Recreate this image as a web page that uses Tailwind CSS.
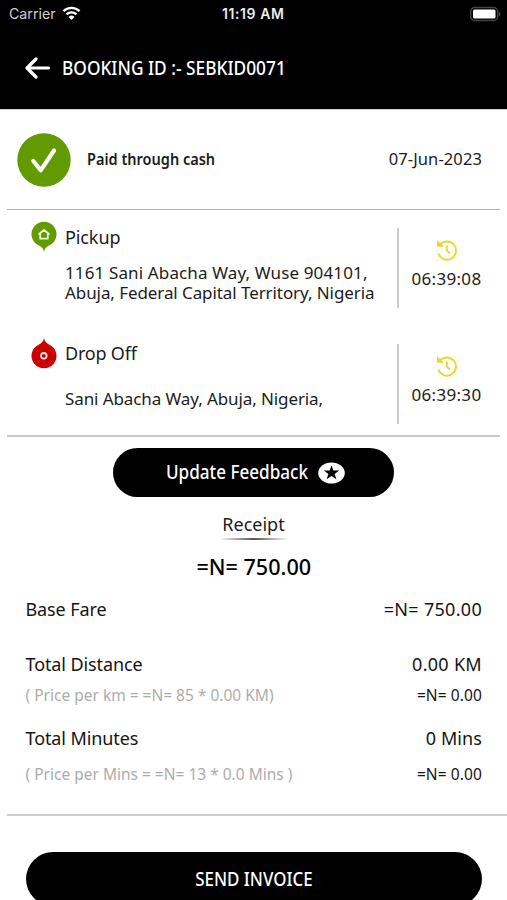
<!DOCTYPE html>
<html lang="en">
<head>
<meta charset="utf-8">
<title>Booking</title>
<script src="https://cdn.jsdelivr.net/npm/@tailwindcss/browser@4"></script>
</head>
<body class="w-[507px] h-[900px] overflow-hidden bg-white font-['Noto_Sans',sans-serif] text-[#1c1c1c] whitespace-nowrap">
<header class="h-[110px] border-b border-[#cfcfcf] bg-black text-white">
  <div class="relative flex h-[28px] items-center pl-[9px] pr-[6px] font-['Inter',sans-serif] text-[14.2px] leading-none">
    <span class="text-[#cfcfcf]">Carrier</span>
    <svg class="ml-[6px] -mt-[2px] w-[19px] h-[14px]" viewBox="0 0 18 14" fill="none" stroke="#fff" stroke-width="2.4"><path d="M1 5.200a11.400 11.400 0 0 1 16 0M4 8.400a7.200 7.200 0 0 1 10 0"/><path d="M9 14l-3-3.100a4.300 4.300 0 0 1 6 0z" fill="#fff" stroke="none"/></svg>
    <span class="absolute left-[222px] font-semibold text-[14px] tracking-[0.6px] text-[#ececec]">11:19 AM</span>
    <svg class="ml-auto -mt-[1px] w-[32px] h-[16px]" viewBox="0 0 32 16"><rect x="1.700" y="1.500" width="27" height="13" rx="4" fill="none" stroke="#444" stroke-width="1.500"/><rect x="4" y="3.500" width="22.500" height="9" rx="1.500" fill="#fff"/><path d="M30 5.500q2.500 2.500 0 5z" fill="#555"/></svg>
  </div>
  <div class="flex h-[79px] items-center pl-[25px]">
    <svg class="w-[26px] h-[22px]" viewBox="0 0 26 22" fill="none" stroke="#fff" stroke-width="3.200" stroke-linecap="round" stroke-linejoin="round"><path d="M11 2L2 11l9 9M2.500 11h21"/></svg>
    <h1 class="ml-[11px] origin-left scale-x-[0.865] text-[20px] font-medium">BOOKING ID :- SEBKID0071</h1>
  </div>
</header>
<main>
  <section class="mx-[7px] flex h-[100px] items-center border-b border-[#b0b0b0] pl-[10px] pr-[18px]">
    <svg class="w-[54px] h-[54px]" viewBox="0 0 54 54"><circle cx="27" cy="27" r="26.700" fill="#639a00"/><path d="M16.300 28l7.400 9.300L37 17.500" fill="none" stroke="#fff" stroke-width="4.200" stroke-linecap="round" stroke-linejoin="round"/></svg>
    <span class="ml-[16px] origin-left scale-x-[0.88] text-[16.5px] font-semibold">Paid through cash</span>
    <span class="ml-auto text-[16.5px] tracking-[0.1px]">07-Jun-2023</span>
  </section>

  <section class="mx-[7px] h-[227px] border-b-2 border-[#cbcbcb]">
    <article class="flex h-[117px] pt-[11px]">
      <svg class="ml-[24px] w-[26px] h-[32px]" viewBox="0 0 26 32"><path d="M13 31c-.6-3.500-2-4.700-5-6.400A12.500 12.500 0 1 1 18 24.600c-3 1.700-4.400 2.900-5 6.400z" fill="#639a00"/><path d="M8 13l5-4 5 4M9.200 12.500v5.200h7.600v-5.200" fill="none" stroke="#eef8dc" stroke-width="1.700" stroke-linejoin="round" stroke-linecap="round"/></svg>
      <div class="ml-[8px] w-[332px] pt-[1px]">
        <h2 class="h-[30px] text-[18px] leading-[30px] tracking-[-0.1px]">Pickup</h2>
        <p class="mt-[11px] text-[17px] leading-[20px]"><span class="block h-[20px] tracking-[0.13px]">1161 Sani Abacha Way, Wuse 904101,</span><span class="block h-[20px] tracking-[-0.08px]">Abuja, Federal Capital Territory, Nigeria</span></p>
      </div>
      <div class="mt-[7px] flex h-[80px] w-[97px] flex-col items-center border-l-2 border-[#cbcbcb] pt-[11px]">
        <svg class="w-[22px] h-[22px]" viewBox="0 0 22 22" fill="none" stroke="#f0d42f" stroke-width="1.900"><path d="M3.500 6.300A9.100 9.100 0 1 1 2.300 14.500"/><path d="M1.500 2v5.200h5.600z" fill="#f0d42f" stroke-width="1"/><path d="M10.800 6.500v4.800l3 3.200"/></svg>
        <time class="mt-[7px] text-[17px] leading-[22px] tracking-[0.3px]">06:39:08</time>
      </div>
    </article>
    <article class="flex h-[108px] pt-[10px]">
      <svg class="ml-[24px] w-[26px] h-[32px]" viewBox="0 0 26 32"><path d="M13 1c-.6 3.500-2 4.700-5 6.400A12.500 12.500 0 1 0 18 7.400c-3-1.700-4.400-2.900-5-6.400z" fill="#cb0000"/><circle cx="12.800" cy="18.800" r="2.800" fill="none" stroke="#ffe4e4" stroke-width="1.800"/></svg>
      <div class="ml-[8px] w-[332px] pt-[1px]">
        <h2 class="h-[30px] text-[18px] leading-[30px] tracking-[-0.2px]">Drop Off</h2>
        <p class="mt-[21px] text-[17px] leading-[20px] tracking-[-0.1px]">Sani Abacha Way, Abuja, Nigeria,</p>
      </div>
      <div class="mt-[7px] flex h-[80px] w-[97px] flex-col items-center border-l-2 border-[#cbcbcb] pt-[11px]">
        <svg class="w-[22px] h-[22px]" viewBox="0 0 22 22" fill="none" stroke="#f0d42f" stroke-width="1.900"><path d="M3.500 6.300A9.100 9.100 0 1 1 2.300 14.500"/><path d="M1.500 2v5.200h5.600z" fill="#f0d42f" stroke-width="1"/><path d="M10.800 6.500v4.800l3 3.200"/></svg>
        <time class="mt-[7px] text-[17px] leading-[22px] tracking-[0.3px]">06:39:30</time>
      </div>
    </article>
  </section>

  <section class="flex flex-col items-center pt-[11px]">
    <button class="flex h-[49px] w-[281px] items-center rounded-full bg-black pl-[53px] text-white">
      <span class="w-[152px] text-left origin-left scale-x-[0.9] text-[19px] font-medium">Update Feedback</span>
      <svg class="w-[27px] h-[22px]" viewBox="0 0 27 22"><ellipse cx="13.500" cy="11" rx="13.300" ry="10.600" fill="#fff"/><path d="M13.500 3.500l1.900 5h5.800l-4.600 3.400 1.800 5.400-4.900-3.300-4.900 3.300 1.800-5.400-4.600-3.400h5.800z" fill="#000"/></svg>
    </button>
    <h2 class="mt-[13px] h-[28px] text-[18px] leading-[28px]">Receipt</h2>
    <div class="h-[2px] w-[70px] bg-linear-to-r from-transparent via-[#555] to-transparent"></div>
    <strong class="mt-[10px] scale-x-[0.96] text-[22.5px] leading-[34px] font-medium text-black">=N= 750.00</strong>
  </section>

  <section class="ml-[7px] mt-[10px] h-[222px] border-b-2 border-[#cfcfcf] pl-[18.5px] pr-[25px] text-[18px] text-[#151515]">
    <div class="flex h-[30px] items-center justify-between"><span class="tracking-[-0.1px]">Base Fare</span><span class="tracking-[0.3px]">=N= 750.00</span></div>
    <div class="mt-[25px] flex h-[30px] items-center justify-between"><span class="tracking-[-0.1px]">Total Distance</span><span class="tracking-[0.3px]">0.00 KM</span></div>
    <div class="mt-[2px] flex h-[30px] items-center justify-between text-[15.5px]"><span class="text-[#adadad]">( Price per km = =N= 85 * 0.00 KM)</span><span class="tracking-[0.1px]">=N= 0.00</span></div>
    <div class="mt-[12px] flex h-[30px] items-center justify-between"><span class="tracking-[-0.1px]">Total Minutes</span><span class="tracking-[0.1px]">0 Mins</span></div>
    <div class="mt-[7px] flex h-[30px] items-center justify-between text-[15.5px]"><span class="text-[#adadad]">( Price per Mins = =N= 13 * 0.0 Mins )</span><span class="tracking-[0.1px]">=N= 0.00</span></div>
  </section>

  <button class="ml-[26px] mt-[36px] flex h-[54px] w-[456px] items-center justify-center rounded-full bg-black text-white">
    <span class="scale-x-[0.89] text-[19px] font-medium">SEND INVOICE</span>
  </button>
</main>
</body>
</html>
